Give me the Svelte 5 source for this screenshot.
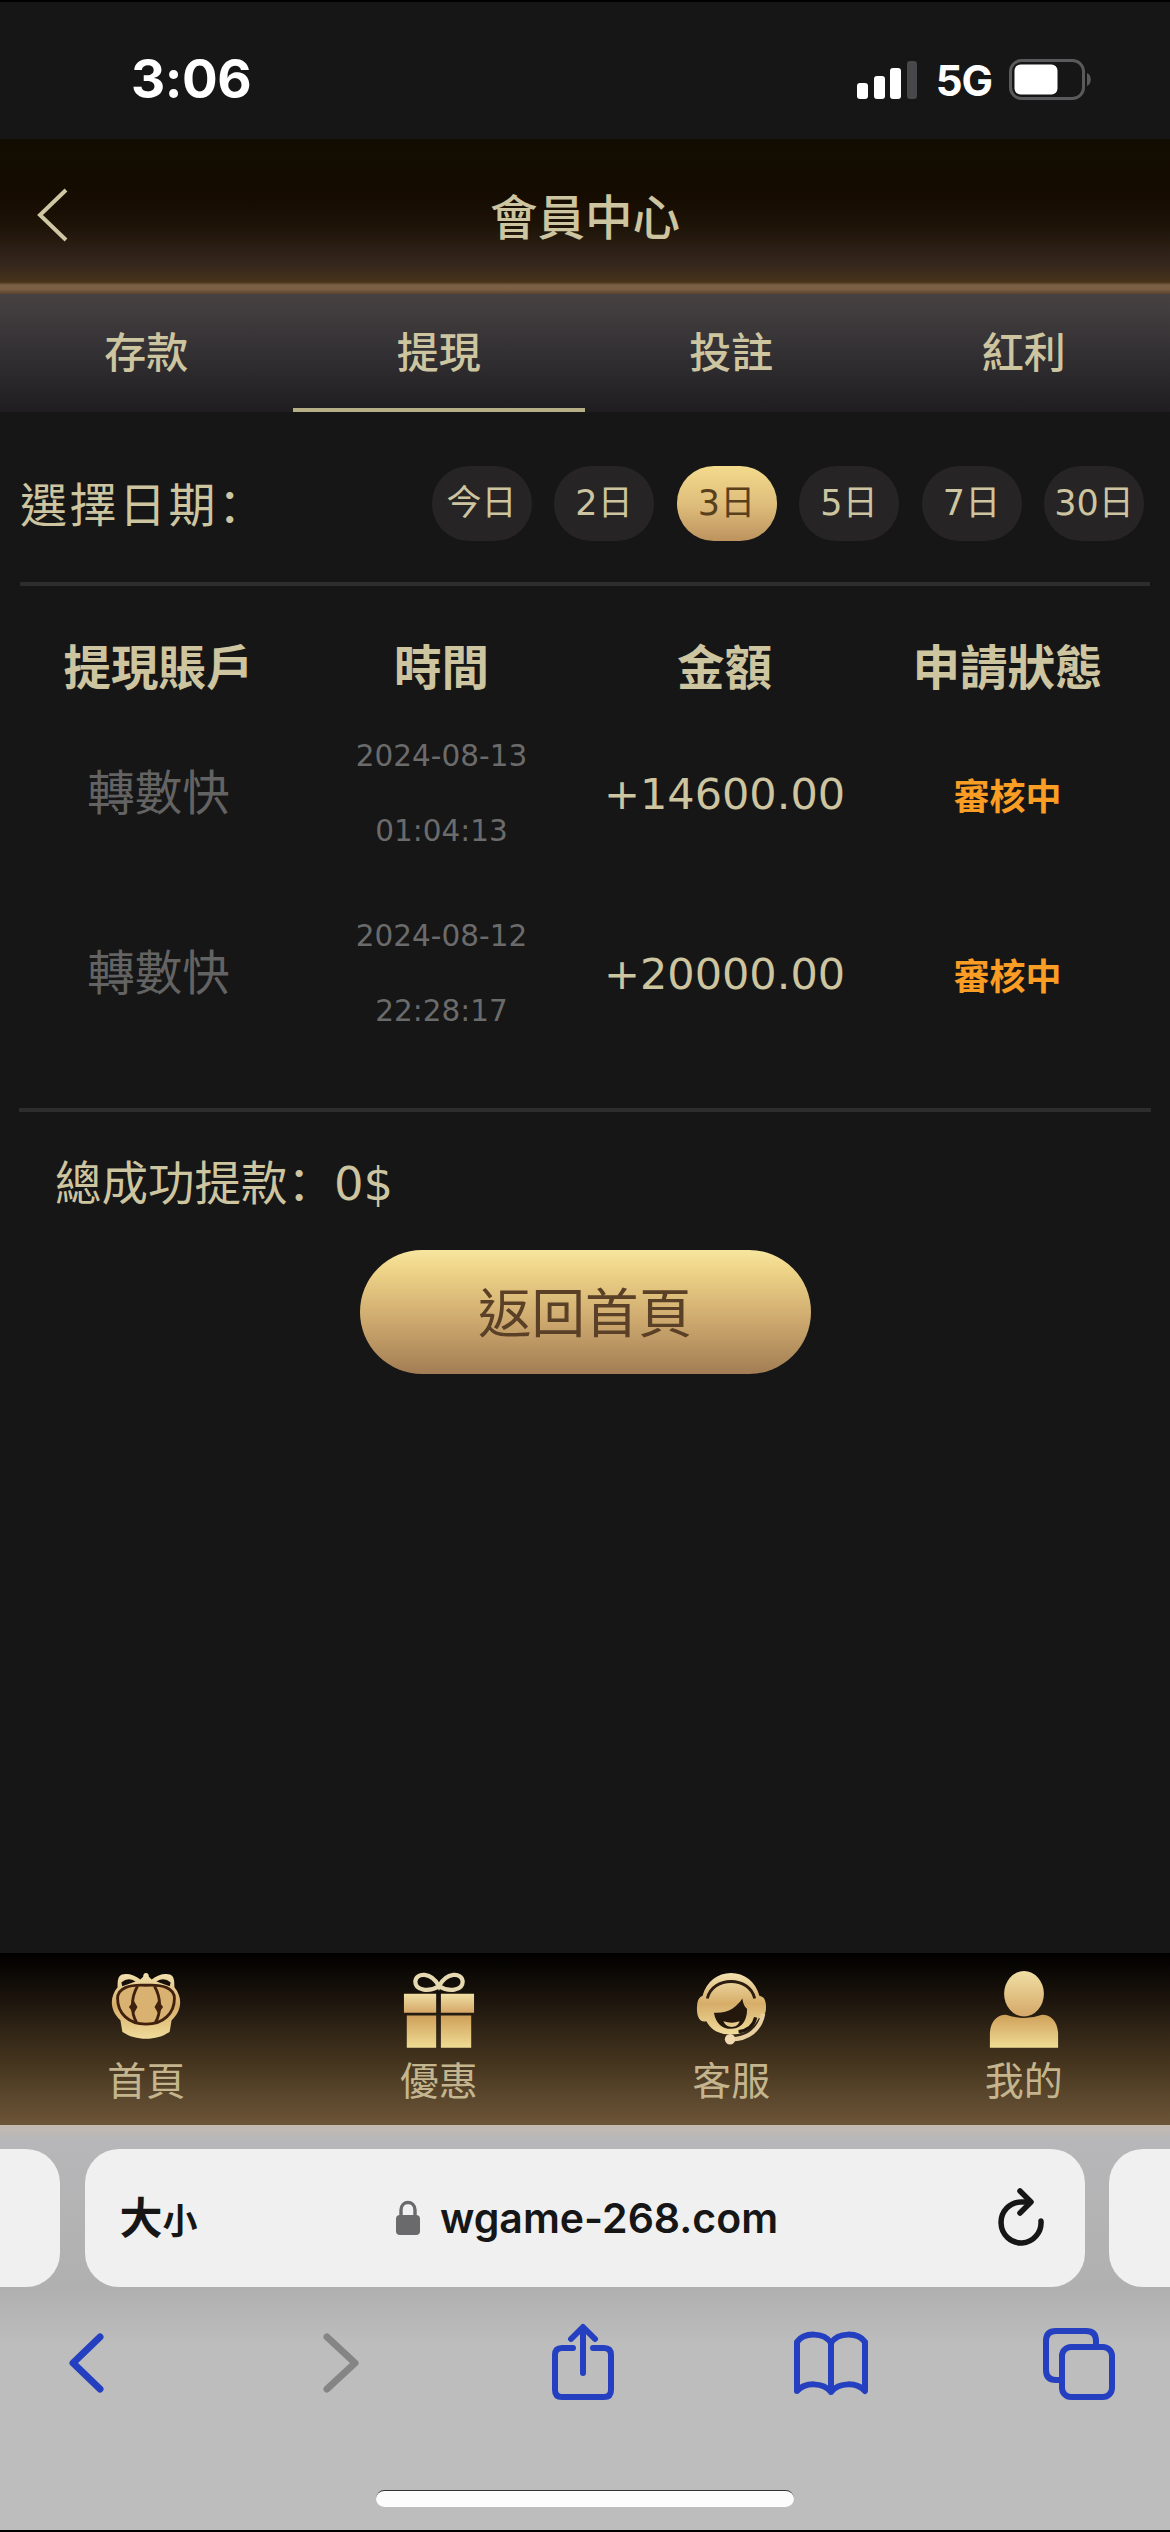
<script>
  const tabs = ["存款", "提現", "投註", "紅利"];
  const ranges = ["今日", "2日", "3日", "5日", "7日", "30日"];
  const columns = ["提現賬戶", "時間", "金額", "申請狀態"];
  const records = [
    { account: "轉數快", date: "2024-08-13", time: "01:04:13", amount: "+14600.00", status: "審核中" },
    { account: "轉數快", date: "2024-08-12", time: "22:28:17", amount: "+20000.00", status: "審核中" },
  ];
  const navItems = [
    { icon: "home", label: "首頁" },
    { icon: "gift", label: "優惠" },
    { icon: "service", label: "客服" },
    { icon: "mine", label: "我的" },
  ];

  let activeTab = $state("提現");
  let activeRange = $state("3日");
</script>

<div class="screen">
  <div class="status-bar">
    <span class="clock">3:06</span>
    <div class="status-right">
      <svg class="signal" width="60" height="40" viewBox="0 0 60 40">
        <rect x="0" y="23" width="11" height="16" rx="3" fill="#fff" />
        <rect x="17" y="16" width="11" height="23" rx="3" fill="#fff" />
        <rect x="33" y="8" width="11" height="31" rx="3" fill="#fff" />
        <rect x="50" y="1" width="10" height="38" rx="3" fill="#48484a" />
      </svg>
      <span class="network">5G</span>
      <svg class="battery" width="83" height="42" viewBox="0 0 83 42">
        <rect x="1.5" y="1.5" width="73" height="38" rx="11" fill="none" stroke="#5a5a5c" stroke-width="3" />
        <rect x="5.5" y="5.5" width="43" height="30" rx="6" fill="#fff" />
        <path d="M78 14c5 2 5 11 0 13z" fill="#5a5a5c" />
      </svg>
    </div>
  </div>

  <header class="header">
    <button class="back" aria-label="返回">
      <svg width="34" height="56" viewBox="0 0 34 56">
        <path d="M31 3L5 28l26 25" fill="none" stroke="#cfc6a4" stroke-width="4" />
      </svg>
    </button>
    <h1>會員中心</h1>
  </header>

  <nav class="tabs">
    {#each tabs as tab}
      <button class:active={tab === activeTab} onclick={() => (activeTab = tab)}>{tab}</button>
    {/each}
  </nav>

  <main class="content">
    <div class="filter">
      <span class="filter-label">選擇日期<span class="colon">：</span></span>
      <div class="ranges">
        {#each ranges as range}
          <button class:active={range === activeRange} onclick={() => (activeRange = range)}>{range}</button>
        {/each}
      </div>
    </div>

    <div class="table">
      <div class="row head">
        {#each columns as column}
          <div>{column}</div>
        {/each}
      </div>
      {#each records as record}
        <div class="row">
          <div class="account">{record.account}</div>
          <div class="time"><span>{record.date}</span><span>{record.time}</span></div>
          <div class="amount">{record.amount}</div>
          <div class="state">{record.status}</div>
        </div>
      {/each}
    </div>

    <div class="total">總成功提款<span class="colon">：</span>0$</div>
    <button class="go-home">返回首頁</button>
  </main>

  <nav class="bottom-nav">
    <svg class="defs" width="0" height="0" aria-hidden="true">
      <linearGradient id="gold" x1="0" y1="0" x2="0" y2="1">
        <stop offset="0" stop-color="#f3e2b0" />
        <stop offset="0.5" stop-color="#d6ad68" />
        <stop offset="1" stop-color="#f0dc9c" />
      </linearGradient>
      <linearGradient id="gold-head" x1="0" y1="0" x2="0" y2="1">
        <stop offset="0" stop-color="#f0dfa4" />
        <stop offset="1" stop-color="#d5a868" />
      </linearGradient>
      <linearGradient id="gold-body" x1="0" y1="0" x2="0" y2="1">
        <stop offset="0" stop-color="#cfa05a" />
        <stop offset="1" stop-color="#efdc94" />
      </linearGradient>
    </svg>
    {#each navItems as item}
      <button>
        <svg width="76" height="76" viewBox="0 0 76 76">
          {#if item.icon === "home"}
            <path
              d="M38 1q3 0 3 4l3 3C50 3 58 1 64 3c4 2 4 8 4 13C77 27 76 41 65 51l-2 12C50 73 26 73 13 63l-2-12C0 41-1 27 8 16C8 11 8 5 12 3c6-2 14 0 20 5l3-3q0-4 3-4z"
              fill="url(#gold)"
            />
            <path d="M12 11q7-6 15-1l-14 5zM64 11q-7-6-15-1l14 5z" fill="#17100a" />
            <path
              d="M38 14C20 13 8 17 8 28C8 43 19 55 38 55S68 43 68 28C68 17 56 13 38 14z"
              fill="#d9b272"
              stroke="#40210e"
              stroke-width="3"
            />
            <path d="M29 15C22 27 22 43 28 53M47 15C54 27 54 43 48 53" fill="none" stroke="#40210e" stroke-width="3" />
            <path d="M25 30l-5 7 5 7 4-7zM51 30l5 7-5 7-4-7z" fill="#40210e" />
          {:else if item.icon === "gift"}
            <path
              d="M38 15C30 0 14 0 13 10C13 20 28 21 38 15C48 21 63 20 63 10C62 0 46 0 38 15z"
              fill="none"
              stroke="#e6d8b0"
              stroke-width="4.5"
            />
            <path d="M1 23h34v20H1zM40 23h35v20H40z" fill="url(#gold-head)" />
            <path d="M4 46h31v34H4zM40 46h32v34H40z" fill="url(#gold-body)" />
          {:else if item.icon === "service"}
            <path
              d="M8 25C12 10 24 1 38 1s26 9 30 24q7 1 7 12c0 7-2 11-8 12C62 60 51 66 38 66S17 61 12 52Q2 54 2 38Q2 27 8 25z"
              fill="url(#gold)"
            />
            <path d="M13 28C18 4 58 4 63 28" fill="none" stroke="#2b1d0f" stroke-width="3" />
            <path d="M20 43C35 44 44 37 50 28Q51 36 55 39C55 54 47 60 38 60S22 55 20 43z" fill="#24180d" />
            <path d="M30 52q9 3 17 0c-2 8-14 8-17 0z" fill="#e5c98c" />
            <path d="M64 48C62 57 55 62 46 63" fill="none" stroke="#21160c" stroke-width="3.5" />
            <path d="M72 44C69 61 56 71 38 71" fill="none" stroke="#e8cfa0" stroke-width="4.5" />
            <circle cx="37" cy="71" r="5.5" fill="#f1d9b0" />
          {:else}
            <ellipse cx="38" cy="23" rx="21" ry="24" fill="url(#gold-head)" />
            <path d="M2 80V64C3 51 10 45 19 45q19 7 38 0c9 0 16 6 17 19v16z" fill="url(#gold-body)" />
          {/if}
        </svg>
        <span>{item.label}</span>
      </button>
    {/each}
  </nav>

  <footer class="browser">
    <div class="address-row">
      <div class="side-tab left"></div>
      <div class="address">
        <span class="text-size">大<small>小</small></span>
        <div class="url">
          <svg width="26" height="36" viewBox="0 0 26 36">
            <path d="M6 17v-7c0-10 14-10 14 0v7" fill="none" stroke="#6a6a6c" stroke-width="3.4" />
            <rect x="1" y="15" width="24" height="20" rx="4" fill="#6a6a6c" />
          </svg>
          <span>wgame-268.com</span>
        </div>
        <svg class="reload" width="50" height="58" viewBox="0 0 50 58">
          <path d="M33 14H25A20 20.500 0 1 0 45 33" fill="none" stroke="#161616" stroke-width="5.5" stroke-linecap="round" />
          <path d="M24 3l11 11-11 11" fill="none" stroke="#161616" stroke-width="5.500" stroke-linecap="round" stroke-linejoin="round" />
        </svg>
      </div>
      <div class="side-tab right"></div>
    </div>
    <div class="toolbar">
      <svg class="chevron" width="80" height="80" viewBox="0 0 80 80">
        <path d="M54 14L27 40l27 26" />
      </svg>
      <svg class="chevron disabled" width="80" height="80" viewBox="0 0 80 80">
        <path d="M33 14l28 26-28 26" />
      </svg>
      <svg width="80" height="80" viewBox="0 0 80 80">
        <path d="M31 25H20q-7 0-7 7v35q0 7 7 7h42q7 0 7-7V32q0-7-7-7H51M41 50V5M29 16L41 4l12 12" />
      </svg>
      <svg width="80" height="80" viewBox="0 0 80 80">
        <path d="M41 20C34 9 14 9 7 19v49C15 59 33 59 41 69C49 59 67 59 75 68V19C68 9 48 9 41 20v49" />
      </svg>
      <svg width="80" height="80" viewBox="0 0 80 80">
        <path d="M21 57h-3q-10 0-10-10V18Q8 8 18 8h30q10 0 10 10v5" />
        <rect x="24" y="24" width="50" height="50" rx="9" />
      </svg>
    </div>
    <div class="home-indicator"></div>
  </footer>
</div>

<style>
  :global(body) {
    margin: 0;
    background: #161616;
  }
  .screen {
    width: 1170px;
    height: 2532px;
    box-sizing: border-box;
    border-top: 2px solid #000;
    border-bottom: 2px solid #000;
    background: #161616;
    color: #cdc4a0;
    font-family: "DejaVu Sans", "Noto Sans CJK TC", sans-serif;
    display: flex;
    flex-direction: column;
    overflow: hidden;
  }
  button {
    border: 0;
    padding: 0;
    background: none;
    color: inherit;
    font: inherit;
    cursor: pointer;
  }
  svg {
    display: block;
    flex: none;
  }

  .status-bar {
    height: 137px;
    flex: none;
    box-sizing: border-box;
    padding: 18px 78px 0 131px;
    display: flex;
    align-items: center;
    justify-content: space-between;
    color: #fff;
    font-family: Inter, sans-serif;
    line-height: 1;
  }
  .clock {
    font-size: 53px;
    font-weight: 700;
    letter-spacing: -0.500px;
  }
  .status-right {
    display: flex;
    align-items: center;
  }
  .network {
    font-size: 42px;
    font-weight: 700;
    margin: 3px 17px 0 19px;
    letter-spacing: -1px;
  }

  .header {
    height: 155px;
    flex: none;
    box-sizing: border-box;
    background: linear-gradient(#120d02 0, #160c01 60px, #1c1206 85px, #35261d 125px, #47331a 143px, #7b6045 146px, #7b6045 150px, #5a4330 155px);
    display: grid;
    grid-template-columns: 120px 1fr 120px;
    align-items: center;
  }
  .back {
    margin-left: 35px;
    margin-bottom: 4px;
  }
  .header h1 {
    margin: 0 0 4px;
    text-align: center;
    font-size: 47.500px;
    font-weight: 500;
    line-height: 1;
    font-family: "Noto Sans CJK TC", sans-serif;
  }

  .tabs {
    height: 118px;
    flex: none;
    display: grid;
    grid-template-columns: repeat(4, 1fr);
    background: linear-gradient(#474142, #353235 45%, #1f1d20);
    font-family: "Noto Sans CJK TC", sans-serif;
  }
  .tabs button {
    box-sizing: border-box;
    border-bottom: 4px solid transparent;
    padding-bottom: 3px;
    font-size: 42px;
    font-weight: 500;
    line-height: 1;
  }
  .tabs button.active {
    border-bottom-color: #b5ae87;
  }

  .content {
    flex: 1;
    padding: 0 20px;
    display: flex;
    flex-direction: column;
  }
  .filter {
    height: 174px;
    box-sizing: border-box;
    border-bottom: 4px solid #2d2d2d;
    padding: 12px 6px 0 0;
    display: flex;
    align-items: center;
    justify-content: space-between;
  }
  .filter-label {
    font-size: 47px;
    letter-spacing: 2.500px;
    line-height: 1;
  }
  .colon {
    font-family: "Noto Sans CJK SC", sans-serif;
  }
  .ranges {
    display: flex;
    gap: 22.500px;
  }
  .ranges button {
    width: 100px;
    height: 75px;
    border-radius: 37px;
    background: #262425;
    font-size: 35px;
    line-height: 1;
    white-space: nowrap;
  }
  .ranges button.active {
    background: linear-gradient(#f3da8c, #dfbe7c 50%, #bd935e);
    color: #59401d;
  }

  .table {
    margin: 0 -1px;
    height: 526px;
    border-bottom: 4px solid #2d2d2d;
    padding-top: 28px;
    box-sizing: border-box;
  }
  .row {
    display: grid;
    grid-template-columns: repeat(4, 283px);
    margin-left: -2px;
    height: 180px;
    align-items: center;
    text-align: center;
    line-height: 1;
  }
  .row.head {
    height: 90px;
    box-sizing: border-box;
    padding-top: 12px;
    font-size: 47.500px;
    font-weight: 700;
    font-family: "Noto Sans CJK TC", sans-serif;
  }
  .account {
    font-size: 47.500px;
    color: #636363;
  }
  .time {
    display: flex;
    flex-direction: column;
    font-size: 29.500px;
    line-height: 75px;
    color: #6b6b6b;
  }
  .amount {
    font-size: 43px;
  }
  .state {
    font-size: 36px;
    font-weight: 700;
    font-family: "Noto Sans CJK TC", sans-serif;
    color: #f99d24;
  }

  .total {
    margin: 42px 0 0 35px;
    height: 52px;
    line-height: 52px;
    font-size: 46.500px;
  }
  .go-home {
    align-self: center;
    margin-top: 44px;
    width: 451px;
    height: 124px;
    box-sizing: border-box;
    border-radius: 62px;
    background: linear-gradient(#f7e6a0, #efd588 15%, #cfab70 55%, #a27d54);
    color: #5a4026;
    font-size: 53.500px;
    line-height: 1;
    padding-top: 6px;
  }

  .bottom-nav {
    height: 172px;
    flex: none;
    box-sizing: border-box;
    padding-top: 19px;
    display: grid;
    grid-template-columns: repeat(4, 1fr);
    background: linear-gradient(#000, #1d150d 28%, #46361f 65%, #6c5538);
    color: #c4b58e;
  }
  .defs {
    position: absolute;
  }
  .bottom-nav button {
    display: flex;
    flex-direction: column;
    align-items: center;
    font-size: 39px;
    line-height: 1;
    gap: 18px;
  }
  .bottom-nav svg:not(.defs) {
    height: 72px;
    overflow: visible;
  }

  .browser {
    height: 405px;
    flex: none;
    background: linear-gradient(#c4bab2 0, #b7b7b9 14px, #b0b0b0 165px, #bdbdbd 220px);
    display: flex;
    flex-direction: column;
    align-items: center;
  }
  .address-row {
    width: 1170px;
    margin-top: 24px;
    height: 138px;
    display: grid;
    grid-template-columns: 60px 1000px 61px;
    column-gap: 24.500px;
  }
  .side-tab,
  .address {
    background: #f0f0f0;
    border-radius: 34px;
  }
  .side-tab.left {
    border-radius: 0 34px 34px 0;
  }
  .side-tab.right {
    border-radius: 34px 0 0 34px;
  }
  .address {
    display: grid;
    grid-template-columns: 150px 1fr 150px;
    align-items: center;
    color: #161616;
    font-family: Inter, "Noto Sans CJK TC", sans-serif;
  }
  .text-size {
    padding-left: 35px;
    font-size: 43px;
    font-weight: 700;
    line-height: 1;
    white-space: nowrap;
  }
  .text-size small {
    font-size: 35px;
  }
  .url {
    display: flex;
    align-items: center;
    justify-content: center;
    gap: 19px;
    padding-left: 4px;
    font-size: 41px;
    font-weight: 600;
    line-height: 1;
  }
  .reload {
    justify-self: end;
    margin-right: 39px;
    margin-top: -3px;
  }
  .toolbar {
    width: 1072px;
    margin: 36px 6px 0 0;
    display: flex;
    justify-content: space-between;
  }
  .toolbar svg {
    fill: none;
    stroke: #2440c0;
    stroke-width: 6;
    stroke-linecap: round;
    stroke-linejoin: round;
  }
  .toolbar svg.chevron {
    stroke-width: 7;
  }
  .toolbar svg.disabled {
    stroke: #858585;
  }
  .home-indicator {
    margin-top: 87px;
    width: 418px;
    height: 16px;
    border-top: 1px solid #333;
    border-radius: 9px;
    background: #fcfcfc;
  }
</style>
